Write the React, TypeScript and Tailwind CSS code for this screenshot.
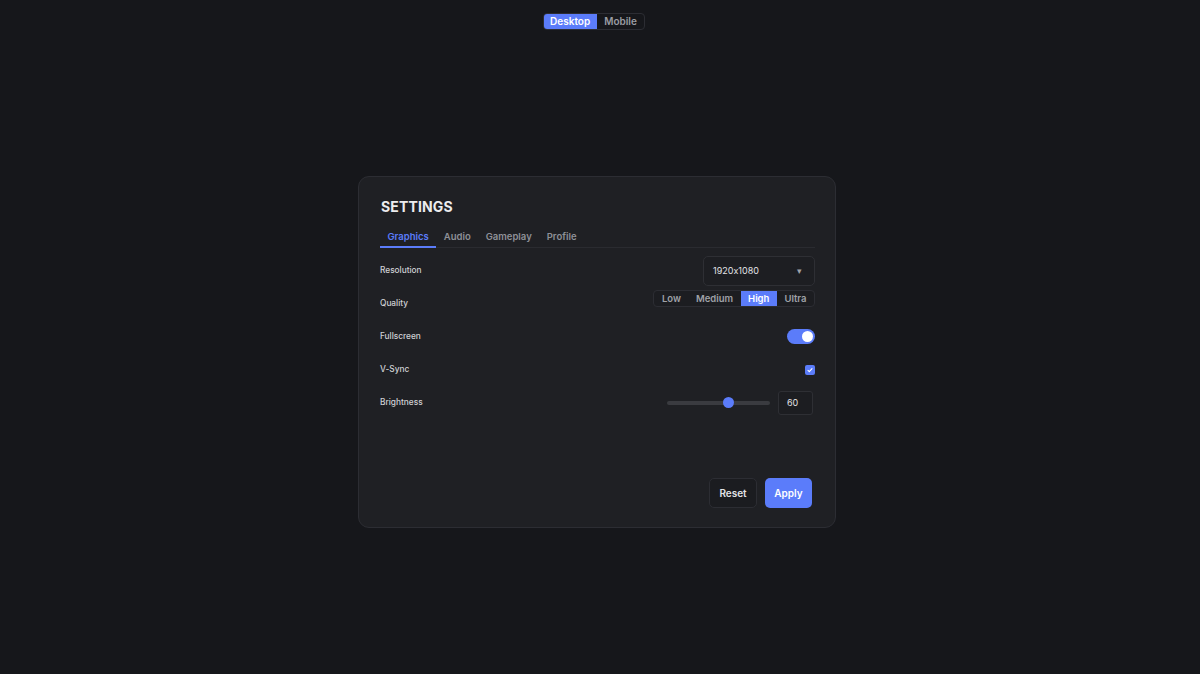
import React, { useState } from "react";

export default function App() {
  const [view, setView] = useState("Desktop");
  const [tab, setTab] = useState("Graphics");
  const [quality, setQuality] = useState("High");
  const [full, setFull] = useState(true);
  const [vsync, setVsync] = useState(true);
  const [bright, setBright] = useState(60);

  const tabs = ["Graphics", "Audio", "Gameplay", "Profile"];
  const qualities = ["Low", "Medium", "High", "Ultra"];

  return (
    <div
      className="min-h-[674px] w-full bg-[#16171b] flex flex-col items-center pr-[6px] [font-feature-settings:'calt'_0]"
      style={{ fontFamily: "Inter, 'Noto Sans', sans-serif" }}
    >
      <div className="mt-[13px] mr-[6px] flex h-[17px] rounded-[4px] border border-[#2c2d33] overflow-hidden">
        {["Desktop", "Mobile"].map((v) => (
          <button
            key={v}
            onClick={() => setView(v)}
            className={
              "h-full text-[10px] leading-[15px] font-semibold " +
              (v === "Desktop" ? "px-[6.5px] " : "px-[7.5px] ") +
              (view === v ? "bg-[#5b7cfa] text-white" : "text-[#9a9ca3]")
            }
          >
            {v}
          </button>
        ))}
      </div>

      <div className="mt-[146px] w-[478px] h-[352px] rounded-[11px] border border-[#2c2d33] bg-[#1f2024] flex flex-col">
        <div className="pt-[21px] pl-[21px] pr-[20px]">
          <div className="pl-[1px] text-[14px] leading-[17px] font-bold tracking-[0.01em] text-[#ececee]">
            SETTINGS
          </div>
          <div className="mt-[16px] flex border-b border-[#2a2b30]">
            {tabs.map((t) => (
              <button
                key={t}
                onClick={() => setTab(t)}
                className={
                  "px-[7.5px] pb-[3px] -mb-px text-[9.5px] leading-[12px] font-semibold border-b-2 " +
                  (tab === t
                    ? "text-[#5b7cfa] border-[#5b7cfa]"
                    : "text-[#8e9097] border-transparent")
                }
              >
                {t}
              </button>
            ))}
          </div>

          <div className="mt-[6px] flex flex-col">
            <div className="h-[33px] flex items-center justify-between">
              <span className="text-[8.3px] font-medium text-[#cfd0d4]">Resolution</span>
              <div className="w-[112px] h-[30px] rounded-[5px] border border-[#2e2f34] bg-[#1d1e22] flex items-center justify-between pl-[9px] pr-[12px]">
                <span className="text-[9px] text-[#e2e3e6]">1920x1080</span>
                <span className="text-[9px] leading-none text-[#a0a2a8]">▾</span>
              </div>
            </div>

            <div className="h-[33px] flex items-center justify-between">
              <span className="text-[8.3px] font-medium text-[#cfd0d4]">Quality</span>
              <div className="mb-[10px] flex h-[17px] rounded-[4px] border border-[#2c2d33] bg-[#1c1d21] overflow-hidden">
                {qualities.map((q) => (
                  <button
                    key={q}
                    onClick={() => setQuality(q)}
                    className={
                      "h-full px-[7.5px] text-[9.5px] leading-[15px] font-semibold " +
                      (quality === q ? "bg-[#5b7cfa] text-white" : "text-[#9fa1a7]")
                    }
                  >
                    {q}
                  </button>
                ))}
              </div>
            </div>

            <div className="h-[33px] flex items-center justify-between">
              <span className="text-[8.3px] font-medium text-[#cfd0d4]">Fullscreen</span>
              <button
                onClick={() => setFull(!full)}
                className={
                  "w-[28px] h-[15px] rounded-full flex items-center px-[2px] " +
                  (full ? "bg-[#5b7cfa] justify-end" : "bg-[#3a3b40] justify-start")
                }
              >
                <span className="block w-[11px] h-[11px] rounded-full bg-white" />
              </button>
            </div>

            <div className="h-[33px] flex items-center justify-between">
              <span className="text-[8.3px] font-medium text-[#cfd0d4]">V-Sync</span>
              <button
                onClick={() => setVsync(!vsync)}
                className={
                  "w-[10px] h-[10px] rounded-[2px] flex items-center justify-center " +
                  (vsync ? "bg-[#5b7cfa]" : "border border-[#3a3b40]")
                }
              >
                {vsync && (
                  <svg width="6" height="6" viewBox="0 0 6 6">
                    <path d="M1 3.4 L2.3 4.6 L5 1.6" stroke="white" strokeWidth="1.1" fill="none" strokeLinecap="round" strokeLinejoin="round" />
                  </svg>
                )}
              </button>
            </div>

            <div className="h-[33px] flex items-center justify-between">
              <span className="text-[8.3px] font-medium text-[#cfd0d4]">Brightness</span>
              <div className="flex items-center gap-[8px] mr-[2px]">
                <div className="relative w-[103px] h-[11px] flex items-center">
                  <div className="w-full h-[4px] rounded-full bg-[#3a3b40]" />
                  <div
                    className="absolute top-0 w-[11px] h-[11px] rounded-full bg-[#5b7cfa]"
                    style={{ left: `calc(${bright}% - 5.5px)` }}
                  />
                  <input
                    type="range"
                    min={0}
                    max={100}
                    value={bright}
                    onChange={(e) => setBright(Number(e.target.value))}
                    className="absolute inset-0 w-full opacity-0 cursor-pointer"
                  />
                </div>
                <div className="w-[35px] h-[24px] rounded-[3px] border border-[#2e2f34] bg-[#1c1d21] flex items-center pl-[8px]">
                  <span className="text-[9px] text-[#e2e3e6]">{bright}</span>
                </div>
              </div>
            </div>
          </div>
        </div>

        <div className="flex-1" />

        <div className="flex justify-end gap-[8px] pr-[23px] pb-[19px]">
          <button className="w-[48px] h-[30px] rounded-[5px] border border-[#2c2d33] bg-[#1b1c20] text-[10px] font-semibold text-[#e2e3e6]">
            Reset
          </button>
          <button className="w-[47px] h-[30px] rounded-[5px] bg-[#5b7cfa] text-[10px] font-semibold text-white">
            Apply
          </button>
        </div>
      </div>
    </div>
  );
}
